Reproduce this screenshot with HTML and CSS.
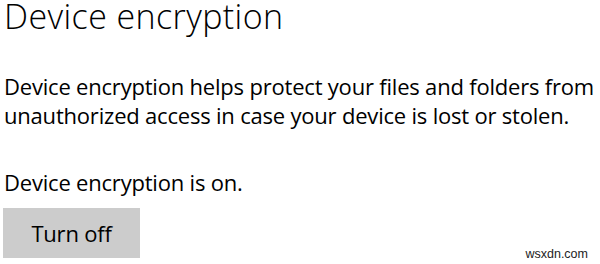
FILE: index.html
```html
<!DOCTYPE html>
<html lang="en">
<head>
<meta charset="utf-8">
<link rel="stylesheet" href="styles.css">
</head>
<body>
<main class="page">
  <h1 class="title">Device encryption</h1>
  <p class="desc">Device encryption helps protect your files and folders from unauthorized access in case your device is lost or stolen.</p>
  <p class="status">Device encryption is on.</p>
  <button class="btn" type="button">Turn off</button>
</main>
<div class="mark">wsxdn.com</div>
</body>
</html>
```
FILE: styles.css
```css
html, body {
  margin: 0;
  padding: 0;
  background: #ffffff;
  width: 600px;
  height: 264px;
  overflow: hidden;
}
body {
  position: relative;
  font-family: "Open Sans", "Noto Sans", sans-serif;
  color: #000000;
}
.page {
  display: flex;
  flex-direction: column;
  align-items: flex-start;
  padding: 0 0 0 4px;
}
.title {
  margin: -3px 0 0 0;
  font-size: 34px;
  font-weight: 300;
  line-height: 38px;
  letter-spacing: 0.4px;
  white-space: nowrap;
}
.desc {
  margin: 37px 0 0 0;
  font-size: 22px;
  line-height: 29px;
  letter-spacing: -0.2px;
  width: 596px;
}
.status {
  margin: 38px 0 0 0;
  font-size: 22px;
  line-height: 29px;
  letter-spacing: -0.2px;
}
.btn {
  margin: 11px 0 0 -1px;
  width: 137px;
  height: 50px;
  background: #cccccc;
  border: none;
  font-family: inherit;
  font-size: 22px;
  letter-spacing: -0.2px;
  color: #000;
  padding: 0;
}
.mark {
  position: absolute;
  right: 12px;
  bottom: 3px;
  font-family: "Liberation Sans", Arial, sans-serif;
  font-size: 12.5px;
  color: #222;
}
```
